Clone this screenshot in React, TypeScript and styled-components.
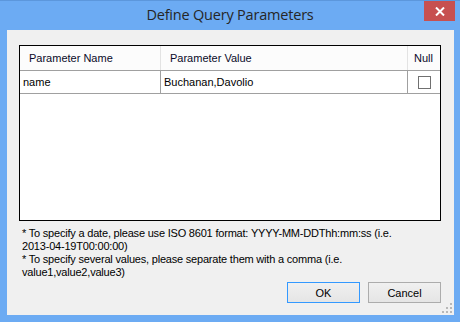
import React from "react";
import styled, { createGlobalStyle } from "styled-components";

const Global = createGlobalStyle`
  html, body { margin: 0; padding: 0; background: #6cabf3; }
  body { width: 460px; height: 322px; overflow: hidden; }
`;

const Window = styled.div`
  width: 460px;
  height: 322px;
  box-sizing: border-box;
  background: #6cabf3;
  border-top: 1px solid #5c97dc;
  display: flex;
  flex-direction: column;
  position: relative;
`;

const TitleBar = styled.div`
  height: 29px;
  display: flex;
  align-items: center;
  justify-content: center;
  font-family: "Open Sans", "Noto Sans", sans-serif;
  font-size: 14.5px;
  letter-spacing: -0.2px;
  color: #262626;
  padding-bottom: 2px;
  box-sizing: border-box;
`;

const CloseButton = styled.div`
  position: absolute;
  top: 0;
  right: 5px;
  width: 31px;
  height: 20px;
  background: #c75050;
  display: flex;
  align-items: center;
  justify-content: center;
`;

const Client = styled.div`
  margin: 0 6px 7px 7px;
  flex: 1;
  background: #f0f0f0;
  display: flex;
  flex-direction: column;
  padding: 15px 13px 0 12px;
  font-family: "Liberation Sans", Arial, sans-serif;
  font-size: 11px;
  color: #000;
  position: relative;
`;

const GridBox = styled.div`
  height: 176px;
  box-sizing: border-box;
  border: 1px solid #000;
  background: #fff;
  display: flex;
  flex-direction: column;
`;

const Row = styled.div<{ $header?: boolean }>`
  display: grid;
  grid-template-columns: 141px 247px 31px;
  height: ${(p) => (p.$header ? "24px" : "22px")};
  border-bottom: 1px solid #a0a0a0;
  background: ${(p) => (p.$header ? "#fcfcfc" : "#fff")};
  color: ${(p) => (p.$header ? "#0a0a28" : "#000")};
`;

const Cell = styled.div<{ $header?: boolean; $center?: boolean; $last?: boolean }>`
  display: flex;
  align-items: center;
  justify-content: ${(p) => (p.$center ? "center" : "flex-start")};
  padding-left: ${(p) => (p.$center ? "0" : p.$header ? "9px" : "3px")};
  border-right: ${(p) =>
    p.$last ? "none" : p.$header ? "1px solid #e3e3e3" : "1px solid #a0a0a0"};
  white-space: nowrap;
  overflow: hidden;
`;

const CheckBox = styled.div`
  width: 13px;
  height: 13px;
  box-sizing: border-box;
  border: 1px solid #707070;
  background: #fff;
  margin-left: 2px;
`;

const Notes = styled.div`
  margin-top: 6px;
  padding-left: 3px;
  line-height: 13px;
  letter-spacing: -0.2px;
  color: #000;
`;

const ButtonRow = styled.div`
  display: flex;
  justify-content: flex-end;
  gap: 8px;
  margin-top: 3px;
`;

const Button = styled.div<{ $default?: boolean }>`
  width: 73px;
  height: 21px;
  box-sizing: border-box;
  border: 1px solid ${(p) => (p.$default ? "#3399ff" : "#acacac")};
  background: linear-gradient(#f0f0f0, #e5e5e5);
  display: flex;
  align-items: center;
  justify-content: center;
  padding-top: 1px;
`;

const Grip = styled.svg`
  position: absolute;
  right: 2px;
  bottom: 2px;
`;

export default function App() {
  return (
    <>
      <Global />
      <Window>
        <TitleBar>Define Query Parameters</TitleBar>
        <CloseButton>
          <svg width="10" height="9" viewBox="0 0 10 9">
            <path d="M1 0.5 L9 8.5 M9 0.5 L1 8.5" stroke="#fff" strokeWidth="2" />
          </svg>
        </CloseButton>
        <Client>
          <GridBox>
            <Row $header>
              <Cell $header>Parameter Name</Cell>
              <Cell $header>Parameter Value</Cell>
              <Cell $header $center $last>Null</Cell>
            </Row>
            <Row>
              <Cell>name</Cell>
              <Cell>Buchanan,Davolio</Cell>
              <Cell $center $last>
                <CheckBox />
              </Cell>
            </Row>
          </GridBox>
          <Notes>
            * To specify a date, please use ISO 8601 format: YYYY-MM-DDThh:mm:ss (i.e.
            <br />
            2013-04-19T00:00:00)
            <br />* To specify several values, please separate them with a comma (i.e.
            <br />
            value1,value2,value3)
          </Notes>
          <ButtonRow>
            <Button $default>OK</Button>
            <Button>Cancel</Button>
          </ButtonRow>
          <Grip width="10" height="10" viewBox="0 0 10 10">
            <g fill="#b8b8b8">
              <rect x="8" y="0" width="2" height="2" />
              <rect x="4" y="4" width="2" height="2" />
              <rect x="8" y="4" width="2" height="2" />
              <rect x="0" y="8" width="2" height="2" />
              <rect x="4" y="8" width="2" height="2" />
              <rect x="8" y="8" width="2" height="2" />
            </g>
          </Grip>
        </Client>
      </Window>
    </>
  );
}
